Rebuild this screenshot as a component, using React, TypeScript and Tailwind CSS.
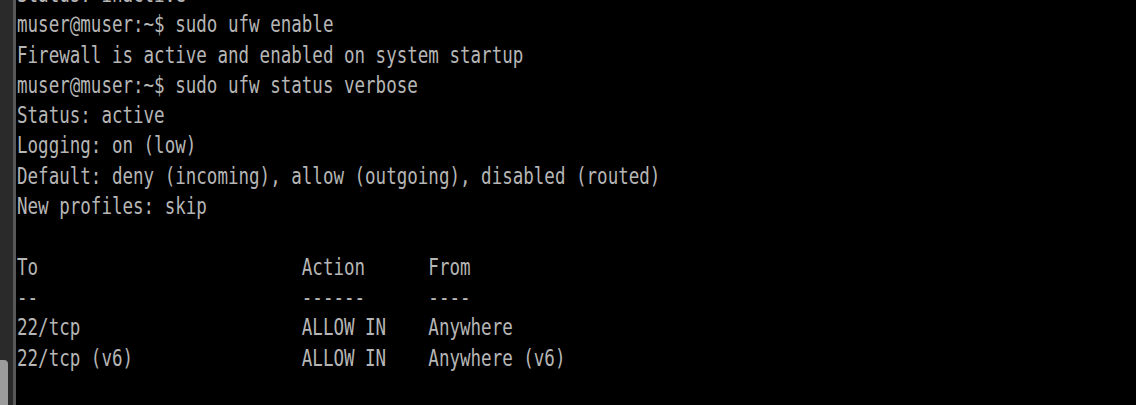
const lines = [
  "Status: inactive",
  "muser@muser:~$ sudo ufw enable",
  "Firewall is active and enabled on system startup",
  "muser@muser:~$ sudo ufw status verbose",
  "Status: active",
  "Logging: on (low)",
  "Default: deny (incoming), allow (outgoing), disabled (routed)",
  "New profiles: skip",
  "",
  "To                         Action      From",
  "--                         ------      ----",
  "22/tcp                     ALLOW IN    Anywhere",
  "22/tcp (v6)                ALLOW IN    Anywhere (v6)",
  "",
];

export default function App() {
  return (
    <div className="flex h-[405px] w-[1136px] overflow-hidden bg-black">
      <div className="flex w-[13px] flex-col justify-end bg-[#2a2a2a]">
        <div className="h-[45px] w-[8px] rounded-tr-[4px] bg-[#9c9c9c]" />
      </div>
      <div className="w-[3px] bg-[#575757]" />
      <div className="flex-1 overflow-hidden pl-[1px]">
        <pre className="-mt-[21px] origin-left scale-x-[0.752] whitespace-pre font-['DejaVu_Sans_Mono',monospace] text-[23.3px] leading-[30.3px] text-[#b6b6b6]">
          {lines.map((l, i) => (
            <div key={i}>{l || " "}</div>
          ))}
        </pre>
      </div>
    </div>
  );
}
